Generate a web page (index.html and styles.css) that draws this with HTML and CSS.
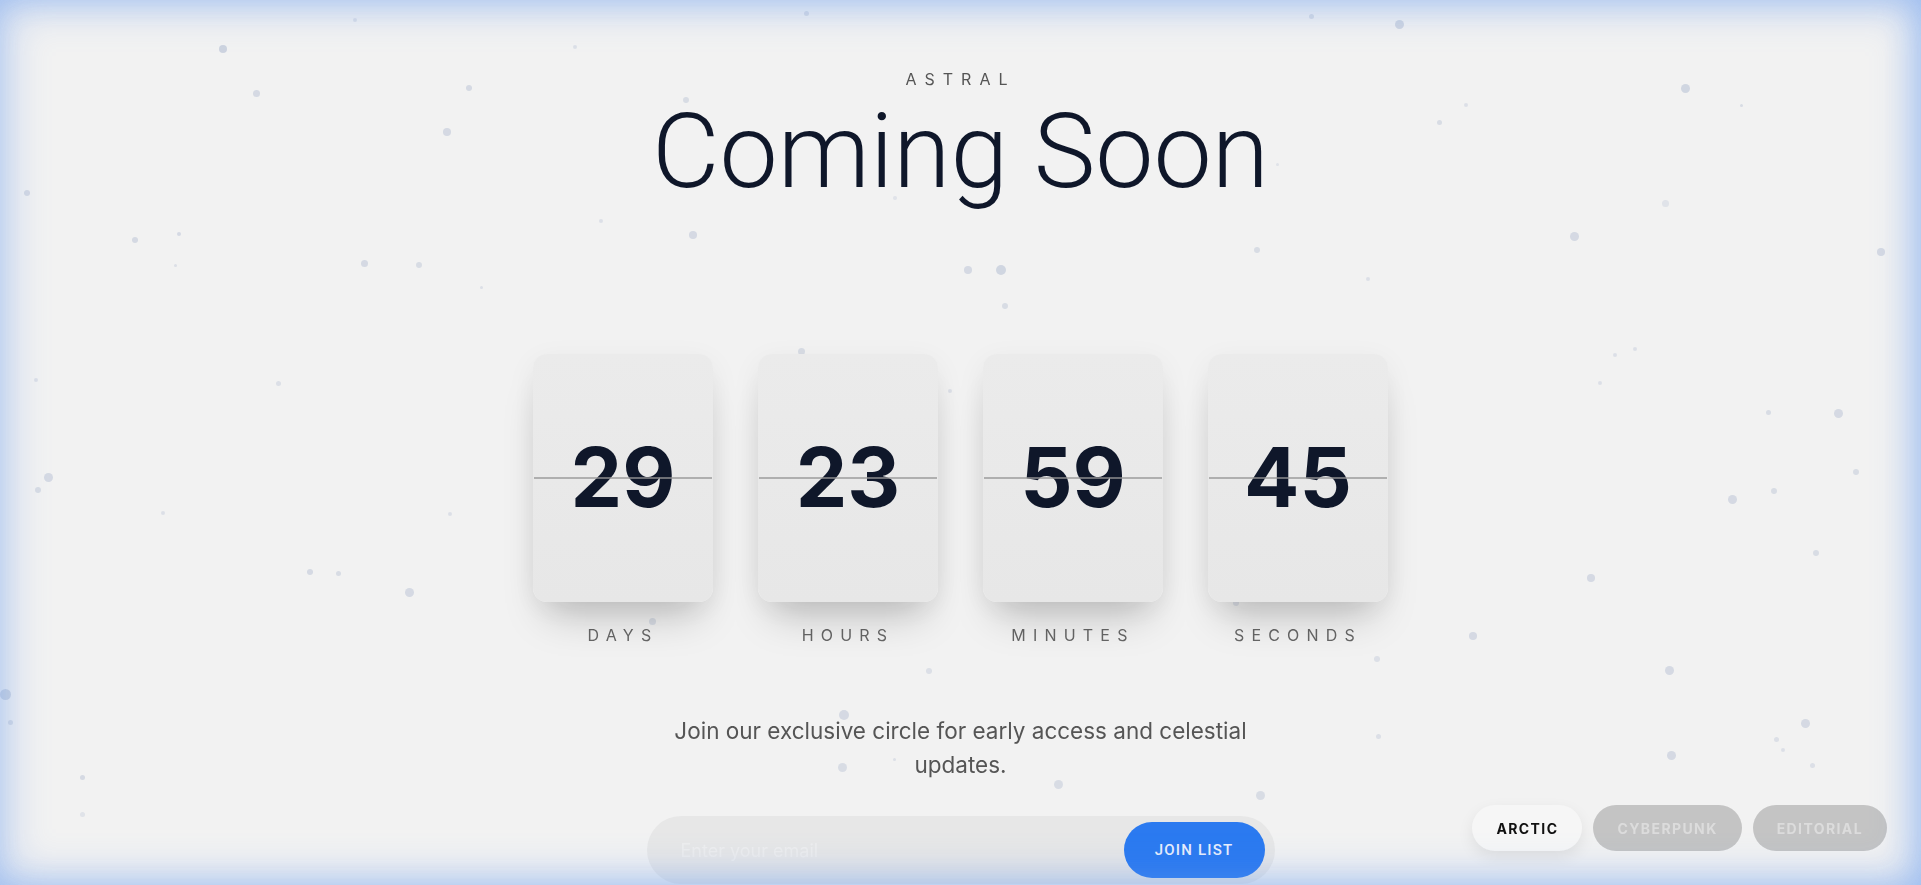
FILE: index.html
```html
<!DOCTYPE html>
<html lang="en">
<head>
<meta charset="UTF-8">
<meta name="viewport" content="width=device-width, initial-scale=1.0">
<title>Astral - Coming Soon</title>
<link rel="stylesheet" href="styles.css">
</head>
<body>

<!-- Floating particles get added here -->
<div class="stars" id="stars"></div>

<main class="page">
    <p class="brand">ASTRAL</p>
    <h1 class="title">Coming Soon</h1>

    <div class="countdown">
        <div class="unit">
            <div class="card"><span class="digits">29</span></div>
            <span class="label">DAYS</span>
        </div>
        <div class="unit">
            <div class="card"><span class="digits">23</span></div>
            <span class="label">HOURS</span>
        </div>
        <div class="unit">
            <div class="card"><span class="digits">59</span></div>
            <span class="label">MINUTES</span>
        </div>
        <div class="unit">
            <div class="card"><span class="digits">45</span></div>
            <span class="label">SECONDS</span>
        </div>
    </div>

    <p class="lead">Join our exclusive circle for early access and celestial updates.</p>

    <form class="signup" onsubmit="return false;">
        <input type="email" placeholder="Enter your email">
        <button type="submit">JOIN LIST</button>
    </form>
</main>

<!-- Theme switcher -->
<div class="themes">
    <button class="theme active">ARCTIC</button>
    <button class="theme">CYBERPUNK</button>
    <button class="theme">EDITORIAL</button>
</div>

<div class="glow"></div>

<script>
    // x, y, size, opacity
    var stars = [
        [223, 49, 8, 1], [256, 93, 7, 0.8], [355, 20, 4, 0.6], [469, 88, 6, 0.8],
        [447, 132, 8, 0.8], [575, 47, 4, 0.6], [806, 13, 5, 0.7], [1311, 16, 5, 0.7],
        [1399, 24, 9, 0.9], [1685, 88, 9, 0.9], [1741, 105, 3, 0.7], [1439, 122, 5, 0.7],
        [1466, 105, 4, 0.6], [27, 193, 6, 0.8], [135, 240, 6, 0.8], [179, 234, 4, 0.8],
        [175, 265, 3, 0.6], [364, 263, 7, 0.8], [419, 265, 6, 0.7], [481, 287, 3, 0.6],
        [601, 221, 4, 0.6], [693, 235, 8, 0.8], [686, 100, 6, 0.7], [904, 133, 6, 0.5],
        [895, 198, 4, 0.5], [1277, 164, 3, 0.5], [968, 270, 8, 0.8], [1001, 270, 10, 0.9],
        [1005, 306, 6, 0.7], [1257, 250, 6, 0.7], [1368, 279, 4, 0.6], [1574, 236, 9, 0.8],
        [1881, 252, 8, 0.8], [1665, 203, 7, 0.5], [801, 351, 7, 0.7], [36, 380, 4, 0.6],
        [278, 383, 5, 0.6], [1615, 355, 4, 0.6], [1600, 383, 4, 0.6], [1635, 349, 4, 0.6],
        [1768, 412, 5, 0.7], [1838, 413, 9, 0.8], [48, 477, 9, 0.8], [38, 490, 6, 0.7],
        [163, 513, 4, 0.6], [450, 514, 4, 0.6], [950, 391, 4, 0.6], [1732, 499, 9, 0.8],
        [1774, 491, 6, 0.7], [1856, 472, 6, 0.7], [1816, 553, 6, 0.7], [310, 572, 6, 0.8],
        [338, 573, 5, 0.7], [409, 592, 9, 0.8], [1591, 578, 8, 0.8], [1473, 636, 8, 0.8],
        [1377, 659, 6, 0.6], [1669, 670, 9, 0.8], [1236, 603, 6, 0.6], [652, 621, 7, 0.7],
        [5, 694, 11, 0.9], [10, 722, 5, 0.7], [82, 777, 5, 0.8], [82, 814, 5, 0.5],
        [844, 715, 10, 0.8], [842, 767, 9, 0.7], [894, 759, 3, 0.6], [1058, 784, 9, 0.7],
        [929, 671, 6, 0.6], [1378, 736, 5, 0.6], [1776, 739, 5, 0.6], [1805, 723, 9, 0.8],
        [1783, 750, 4, 0.6], [1671, 755, 9, 0.8], [1260, 795, 9, 0.7], [1812, 765, 5, 0.6]
    ];

    var field = document.getElementById('stars');
    stars.forEach(function(s) {
        var dot = document.createElement('span');
        dot.className = 'star';
        dot.style.left = (s[0] - s[2] / 2) + 'px';
        dot.style.top = (s[1] - s[2] / 2) + 'px';
        dot.style.width = s[2] + 'px';
        dot.style.height = s[2] + 'px';
        dot.style.opacity = s[3];
        field.appendChild(dot);
    });
</script>

</body>
</html>
```

FILE: styles.css
```css
body {
    margin: 0;
    padding: 0;
    height: 100vh;
    overflow: hidden;
    background-color: #f2f2f2;
    font-family: Inter, "Noto Sans", sans-serif;
    color: #0f172a;
}

/* Particle layer */
.stars {
    position: fixed;
    inset: 0;
    pointer-events: none;
}
.star {
    position: absolute;
    border-radius: 50%;
    background-color: #cdd3df;
    filter: blur(0.6px);
}

.page {
    position: relative;
    display: flex;
    flex-direction: column;
    align-items: center;
    padding-top: 67px;
}

.brand {
    margin: 0;
    font-size: 16px;
    line-height: 24px;
    font-weight: 400;
    letter-spacing: 0.5em;
    color: #555;
}

.title {
    margin: 9px 0 0;
    font-family: Roboto, "Liberation Sans", sans-serif;
    font-size: 104px;
    line-height: 104px;
    font-weight: 300;
    letter-spacing: 0;
    color: #0f172a;
}

/* Flip cards */
.countdown {
    display: flex;
    gap: 45px;
    margin-top: 150px;
}
.unit {
    display: flex;
    flex-direction: column;
    align-items: center;
}
.card {
    position: relative;
    width: 180px;
    height: 248px;
    display: flex;
    align-items: center;
    justify-content: center;
    border-radius: 14px;
    background: linear-gradient(#ebebeb, #e7e7e7);
    box-shadow: 0 26px 40px -14px rgba(0, 0, 0, 0.22), 0 8px 30px rgba(0, 0, 0, 0.06);
}
.card::after {
    content: "";
    position: absolute;
    left: 1px;
    right: 1px;
    top: 123px;
    height: 2px;
    background-color: rgba(150, 150, 150, 0.7);
}
.digits {
    font-size: 82px;
    line-height: 1;
    font-weight: 700;
    letter-spacing: 0;
    color: #0f172a;
}
.label {
    margin-top: 21px;
    font-size: 16px;
    line-height: 24px;
    letter-spacing: 0.45em;
    color: #666;
}

.lead {
    margin: 67px 0 0;
    max-width: 600px;
    text-align: center;
    font-size: 22.5px;
    line-height: 34px;
    color: #555;
}

/* Email form */
.signup {
    display: flex;
    align-items: center;
    box-sizing: border-box;
    width: 628px;
    height: 68px;
    margin-top: 34px;
    padding: 6px 10px 6px 6px;
    border-radius: 34px;
    background-color: #e7e7e7;
}
.signup input {
    flex: 1;
    min-width: 0;
    border: none;
    background: transparent;
    outline: none;
    padding-left: 28px;
    font-family: Inter, sans-serif;
    font-size: 18px;
    color: #333;
}
.signup input::placeholder {
    color: rgba(255, 255, 255, 0.3);
}
.signup button {
    width: 141px;
    height: 56px;
    border: none;
    border-radius: 28px;
    background-color: #2b7af0;
    color: #e9effc;
    font-family: Roboto, sans-serif;
    font-size: 15px;
    font-weight: 500;
    letter-spacing: 0.08em;
    cursor: pointer;
}

/* Theme pills */
.themes {
    position: fixed;
    right: 34px;
    bottom: 34px;
    display: flex;
    gap: 11px;
}
.theme {
    height: 46px;
    padding: 0 24px;
    border: none;
    border-radius: 23px;
    background-color: #c4c4c4;
    color: #dcdcdc;
    font-family: Inter, sans-serif;
    font-size: 14px;
    font-weight: 700;
    letter-spacing: 0.1em;
    cursor: pointer;
}
.theme.active {
    background-color: #f6f6f6;
    color: #111;
    box-shadow: 0 6px 16px rgba(0, 0, 0, 0.08);
}

/* Blue edge glow */
.glow {
    position: fixed;
    inset: 0;
    pointer-events: none;
    box-shadow: inset 0 0 45px 2px rgba(90, 145, 235, 0.45), inset -8px 0 30px rgba(110, 165, 245, 0.3);
}
```
